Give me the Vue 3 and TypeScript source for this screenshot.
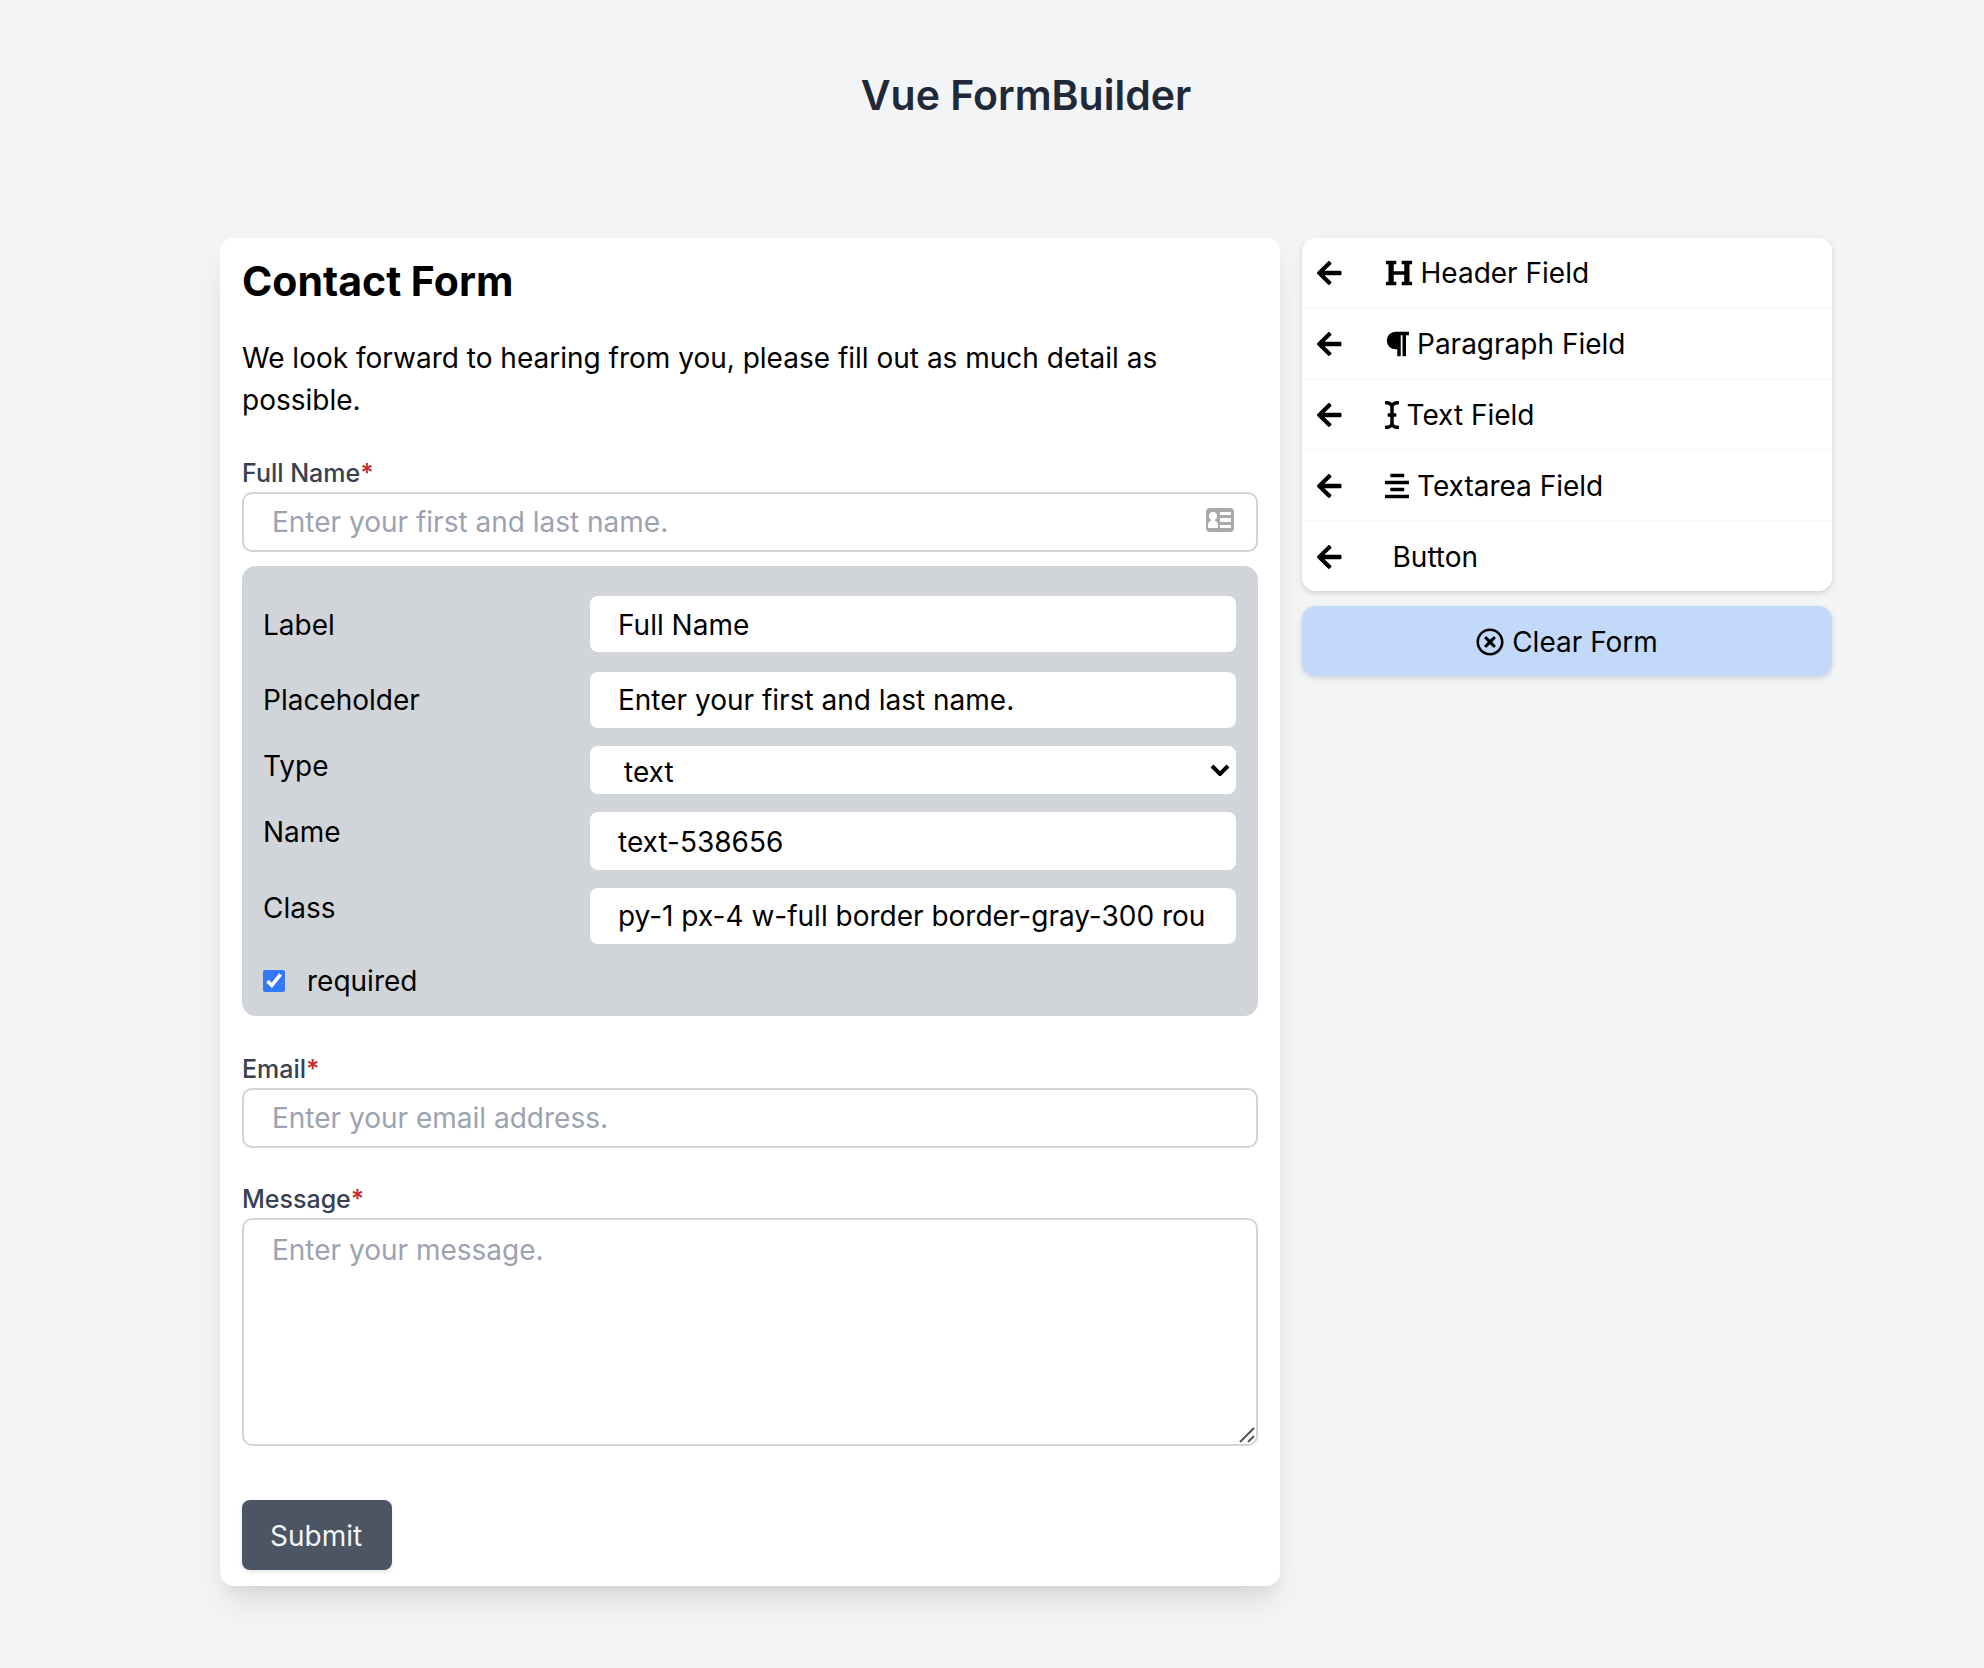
<script setup lang="ts">
import { ref } from 'vue'

interface Icon {
  width: number
  path: string
}

interface FieldType {
  label: string
  icon?: Icon
}

const arrowLeft =
  'M257.5 445.1l-22.2 22.2c-9.4 9.4-24.6 9.4-33.9 0L7 273c-9.4-9.4-9.4-24.6 0-33.9L201.4 44.7c9.4-9.4 24.6-9.4 33.9 0l22.2 22.2c9.5 9.5 9.3 25-.4 34.3L136.6 216H424c13.3 0 24 10.7 24 24v32c0 13.3-10.7 24-24 24H136.6l120.5 114.8c9.8 9.3 10 24.8.4 34.3z'

const fieldTypes: FieldType[] = [
  {
    label: 'Header Field',
    icon: {
      width: 512,
      path: 'M448 96v320h32a16 16 0 0 1 16 16v32a16 16 0 0 1-16 16H320a16 16 0 0 1-16-16v-32a16 16 0 0 1 16-16h32V288H160v128h32a16 16 0 0 1 16 16v32a16 16 0 0 1-16 16H32a16 16 0 0 1-16-16v-32a16 16 0 0 1 16-16h32V96H32a16 16 0 0 1-16-16V48a16 16 0 0 1 16-16h160a16 16 0 0 1 16 16v32a16 16 0 0 1-16 16h-32v128h192V96h-32a16 16 0 0 1-16-16V48a16 16 0 0 1 16-16h160a16 16 0 0 1 16 16v32a16 16 0 0 1-16 16z',
    },
  },
  {
    label: 'Paragraph Field',
    icon: {
      width: 448,
      path: 'M448 48v32a16 16 0 0 1-16 16h-48v368a16 16 0 0 1-16 16h-32a16 16 0 0 1-16-16V96h-32v368a16 16 0 0 1-16 16h-32a16 16 0 0 1-16-16V352h-32a160 160 0 0 1 0-320h240a16 16 0 0 1 16 16z',
    },
  },
  {
    label: 'Text Field',
    icon: {
      width: 256,
      path: 'M256 52.048V12.065C256 5.496 250.726.148 244.158.066 211.621-.344 166.469.011 128 37.959 90.266.736 46.979-.114 11.913.114 5.318.157 0 5.519 0 12.114v39.645c0 6.687 5.458 12.078 12.145 11.998C38.111 63.447 96 67.243 96 112.182V224H60c-6.627 0-12 5.373-12 12v40c0 6.627 5.373 12 12 12h36v112c0 44.932-56.075 48.031-83.95 47.959C5.404 447.942 0 453.306 0 459.952v39.983c0 6.569 5.274 11.917 11.842 11.999 32.537.409 77.689.054 116.158-37.894 37.734 37.223 81.021 38.073 116.087 37.845 6.595-.043 11.913-5.405 11.913-12V460.24c0-6.687-5.458-12.078-12.145-11.998C217.889 448.553 160 444.939 160 400V288h36c6.627 0 12-5.373 12-12v-40c0-6.627-5.373-12-12-12h-36V112.182c0-44.932 56.075-48.213 83.95-48.142 6.646.018 12.05-5.346 12.05-11.992z',
    },
  },
  {
    label: 'Textarea Field',
    icon: {
      width: 448,
      path: 'M432 160H16a16 16 0 0 0-16 16v32a16 16 0 0 0 16 16h416a16 16 0 0 0 16-16v-32a16 16 0 0 0-16-16zm0 256H16a16 16 0 0 0-16 16v32a16 16 0 0 0 16 16h416a16 16 0 0 0 16-16v-32a16 16 0 0 0-16-16zM108.1 96h231.81A12.09 12.09 0 0 0 352 83.9V44.09A12.09 12.09 0 0 0 339.91 32H108.1A12.09 12.09 0 0 0 96 44.09V83.9A12.1 12.1 0 0 0 108.1 96zm231.81 256A12.09 12.09 0 0 0 352 339.9v-39.81A12.09 12.09 0 0 0 339.91 288H108.1A12.09 12.09 0 0 0 96 300.09v39.81a12.1 12.1 0 0 0 12.1 12.1z',
    },
  },
  { label: 'Button' },
]

const label = ref('Full Name')
const placeholder = ref('Enter your first and last name.')
const type = ref('text')
const name = ref('text-538656')
const cssClass = ref('py-1 px-4 w-full border border-gray-300 rounded-md')
const required = ref(true)

const fullName = ref('')
const email = ref('')
const message = ref('')

function clearForm(): void {
  fullName.value = ''
  email.value = ''
  message.value = ''
}
</script>

<template>
  <div class="page">
    <h1 class="page-title">Vue FormBuilder</h1>

    <main class="columns">
      <form class="card" @submit.prevent>
        <h2 class="form-title">Contact Form</h2>
        <p class="copy">We look forward to hearing from you, please fill out as much detail as possible.</p>

        <div class="field">
          <label class="field-label" for="full-name">{{ label }}<span v-if="required" class="star">*</span></label>
          <div class="control-wrap">
            <input id="full-name" v-model="fullName" class="control" :type="type" :placeholder="placeholder" />
            <svg class="contact-icon" viewBox="0 0 28 24" aria-hidden="true">
              <rect width="28" height="24" rx="4" fill="#a9a9a9" />
              <g fill="#fff">
                <circle cx="7" cy="8" r="4" />
                <path d="M5 10h4v3c2 0 3 2 3 4v3H2v-3c0-2 1-4 3-4z" />
                <path d="M14 4h11v3H14zM14 10h11v4H14zM14 17h11v3H14z" />
              </g>
            </svg>
          </div>
        </div>

        <section class="settings" aria-label="Field settings">
          <div class="setting centered tall">
            <label for="set-label">Label</label>
            <input id="set-label" v-model="label" class="setting-input" type="text" />
          </div>
          <div class="setting centered">
            <label for="set-placeholder">Placeholder</label>
            <input id="set-placeholder" v-model="placeholder" class="setting-input" type="text" />
          </div>
          <div class="setting">
            <label for="set-type">Type</label>
            <div class="select-wrap">
              <select id="set-type" v-model="type" class="setting-select">
                <option value="text">text</option>
                <option value="email">email</option>
                <option value="number">number</option>
              </select>
              <svg class="chevron" viewBox="0 0 20 12" aria-hidden="true">
                <path d="M2 2l8 8 8-8" fill="none" stroke="#000" stroke-width="4" />
              </svg>
            </div>
          </div>
          <div class="setting tall">
            <label for="set-name">Name</label>
            <input id="set-name" v-model="name" class="setting-input stretch" type="text" />
          </div>
          <div class="setting">
            <label for="set-class">Class</label>
            <input id="set-class" v-model="cssClass" class="setting-input" type="text" />
          </div>
          <label class="check">
            <input v-model="required" type="checkbox" />
            <span>required</span>
          </label>
        </section>

        <div class="field">
          <label class="field-label" for="email">Email<span class="star">*</span></label>
          <input id="email" v-model="email" class="control" type="email" placeholder="Enter your email address." />
        </div>

        <div class="field">
          <label class="field-label" for="message">Message<span class="star">*</span></label>
          <div class="control-wrap">
            <textarea id="message" v-model="message" class="control area" placeholder="Enter your message."></textarea>
            <svg class="grip" viewBox="0 0 16 16" aria-hidden="true">
              <path d="M1 15L15 1M9 15l6-6" stroke="#555" stroke-width="2" />
            </svg>
          </div>
        </div>

        <button class="submit" type="submit">Submit</button>
      </form>

      <aside class="palette">
        <ul class="types">
          <li v-for="item in fieldTypes" :key="item.label">
            <button class="type" type="button">
              <svg class="arrow" viewBox="0 0 448 512" aria-hidden="true"><path :d="arrowLeft" /></svg>
              <span class="type-name">
                <svg v-if="item.icon" class="icon" :viewBox="`0 0 ${item.icon.width} 512`" aria-hidden="true">
                  <path :d="item.icon.path" />
                </svg>
                <span class="type-text">{{ item.label }}</span>
              </span>
            </button>
          </li>
        </ul>
        <button class="clear" type="button" @click="clearForm">
          <svg class="icon" viewBox="0 0 512 512" aria-hidden="true">
            <path
              d="M256 8C119 8 8 119 8 256s111 248 248 248 248-111 248-248S393 8 256 8zm0 448c-110.500 0-200-89.500-200-200S145.500 56 256 56s200 89.500 200 200-89.500 200-200 200zm101.800-262.200L295.600 256l62.200 62.200c4.700 4.700 4.700 12.300 0 17l-22.600 22.600c-4.700 4.700-12.300 4.700-17 0L256 295.600l-62.200 62.200c-4.700 4.700-12.300 4.700-17 0l-22.600-22.600c-4.700-4.700-4.700-12.300 0-17l62.200-62.200-62.200-62.200c-4.700-4.700-4.700-12.300 0-17l22.600-22.600c4.700-4.700 12.300-4.700 17 0l62.200 62.200 62.200-62.200c4.700-4.700 12.300-4.700 17 0l22.600 22.600c4.700 4.700 4.700 12.300 0 17z"
            />
          </svg>
          Clear Form
        </button>
      </aside>
    </main>
  </div>
</template>

<style>
body {
  background: #f3f4f6;
}
</style>

<style scoped>
.page,
.page * {
  box-sizing: border-box;
}

.page {
  min-height: 100vh;
  padding: 64px 152px 82px 220px;
  background: #f3f4f6;
  color: #000;
  font-family: Inter, 'Liberation Sans', sans-serif;
  font-size: 28px;
  line-height: 42px;
}

button,
input,
select,
textarea {
  margin: 0;
  border: 0;
  color: inherit;
  font: inherit;
}

button {
  cursor: pointer;
}

.page-title {
  margin: 0 0 112px;
  color: #1f2937;
  font-size: 41px;
  font-weight: 600;
  line-height: 62px;
  text-align: center;
}

.columns {
  display: grid;
  grid-template-columns: minmax(0, 2fr) minmax(0, 1fr);
  gap: 22px;
  align-items: start;
}

.card {
  padding: 15px 22px 16px;
  border-radius: 14px;
  background: #fff;
  box-shadow: 0 20px 30px -6px rgba(0, 0, 0, 0.1), 0 8px 12px -4px rgba(0, 0, 0, 0.05);
}

.form-title {
  margin: 0 0 28px;
  font-size: 41px;
  font-weight: 700;
  line-height: 56px;
}

.copy {
  margin: 0 0 35px;
}

.field + .field {
  margin-top: 34px;
}

.field-label {
  display: block;
  margin-bottom: 2px;
  color: #374151;
  font-size: 25px;
  font-weight: 500;
  line-height: 34px;
}

.star {
  color: #c53030;
  font-weight: 600;
}

.control-wrap {
  position: relative;
}

.control {
  display: block;
  width: 100%;
  height: 60px;
  padding: 6px 28px;
  border: 2px solid #d1d5db;
  border-radius: 10px;
  background: #fff;
}

.control::placeholder {
  color: #9ca3af;
  opacity: 1;
}

.area {
  height: 228px;
  padding-top: 9px;
  resize: vertical;
}

.area::-webkit-resizer {
  background: transparent;
}

.grip {
  position: absolute;
  right: 3px;
  bottom: 3px;
  width: 16px;
  height: 16px;
  pointer-events: none;
}

.contact-icon {
  position: absolute;
  top: 16px;
  right: 24px;
  width: 28px;
  height: 24px;
}

.settings {
  display: flex;
  flex-direction: column;
  gap: 18px;
  margin: 14px 0 36px;
  padding: 30px 22px 14px 21px;
  border-radius: 14px;
  background: #d1d5da;
}

.setting {
  display: grid;
  grid-template-columns: minmax(0, 1fr) minmax(0, 2fr);
  gap: 4px;
  align-items: start;
}

.setting > label {
  line-height: 40px;
}

.centered > label {
  align-self: center;
}

.tall {
  height: 58px;
}

.setting-input {
  display: block;
  width: 100%;
  height: 56px;
  padding: 0 30px 0 28px;
  border-radius: 8px;
  background: #fff;
}

.tall .setting-input {
  padding-top: 2px;
}

.stretch {
  height: 58px;
}

.select-wrap {
  position: relative;
}

.setting-select {
  display: block;
  width: 100%;
  height: 48px;
  padding: 4px 34px 0;
  border-radius: 8px;
  background: #fff;
  appearance: none;
}

.chevron {
  position: absolute;
  top: 18px;
  right: 6px;
  width: 20px;
  height: 12px;
  pointer-events: none;
}

.check {
  display: flex;
  align-items: center;
  gap: 22px;
  margin-top: -2px;
}

.check input {
  width: 22px;
  height: 22px;
  accent-color: #3478f6;
}

.submit {
  display: block;
  height: 70px;
  margin-top: 54px;
  padding: 2px 30px 0 28px;
  border-radius: 8px;
  background: #4b5563;
  color: #f3f4f6;
  box-shadow: 0 2px 4px rgba(0, 0, 0, 0.1);
}

.types {
  margin: 0 0 15px;
  padding: 0;
  overflow: hidden;
  border-radius: 14px;
  background: #fff;
  list-style: none;
}

.types,
.clear {
  box-shadow: 0 2px 6px rgba(0, 0, 0, 0.1), 0 2px 4px rgba(0, 0, 0, 0.06);
}

.types li + li {
  border-top: 2px solid #f9fafb;
}

.type {
  display: flex;
  gap: 43px;
  align-items: center;
  width: 100%;
  height: 69px;
  padding: 0 15px;
  background: #fff;
  text-align: left;
}

.type-name,
.clear {
  display: flex;
  gap: 8px;
  align-items: center;
}

.type-text:only-child {
  margin-left: 8px;
}

.arrow,
.icon {
  flex: none;
  height: 28px;
  fill: currentColor;
}

.clear {
  justify-content: center;
  width: 100%;
  height: 70px;
  padding: 2px 0 0;
  border-radius: 14px;
  background: #c3d9fa;
}
</style>
